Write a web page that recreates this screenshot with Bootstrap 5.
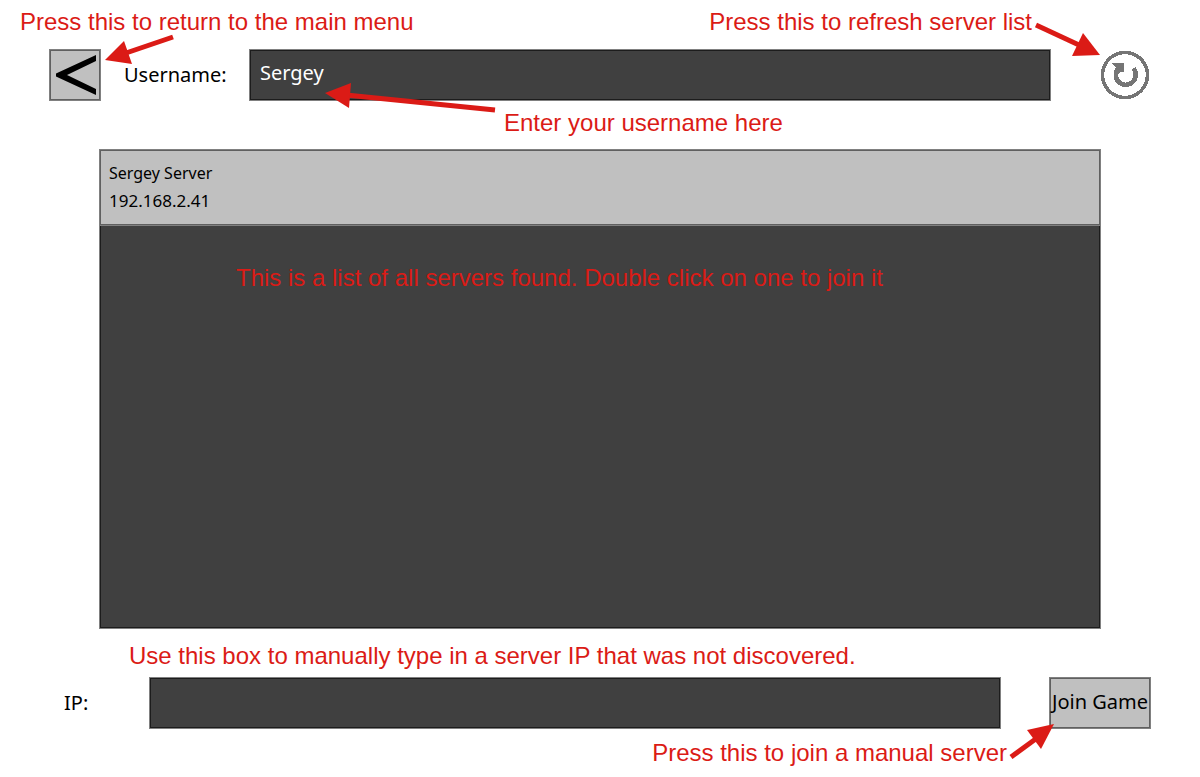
<!DOCTYPE html>
<html lang="en">
<head>
<meta charset="utf-8">
<meta name="viewport" content="width=device-width, initial-scale=1">
<title>Join a server</title>
<link href="https://cdn.jsdelivr.net/npm/bootstrap@5.3.0/dist/css/bootstrap.min.css" rel="stylesheet">
<style>
  body { font-family: "Noto Sans", "Open Sans", sans-serif; font-size: 20px; color: #000; background: #fff; }
  .screen { padding: 0 49px; }
  .panel { border: 1px solid #808080; border-radius: 0; }
  .panel-dark, .panel-dark:focus { background: #404040; color: #fff; box-shadow: inset 0 0 0 1px #1c1c1c; }
  .panel-light { background: #c0c0c0; color: #000; box-shadow: inset 0 0 0 1px #606060; }
  .control { height: 52px; }
  .field { padding: 0 10px 5px 10px; font-size: 20px; min-width: 0; }
  .square { width: 52px; }
  .field-label { width: 148px; padding-left: 23px; }
  .ip-label { width: 100px; padding-left: 15px; }
  .control-gap { margin-left: 48px; }
  .join { width: 102px; font-size: 20px; padding: 0 0 2px 0; }
  .refresh { width: 52px; }
  .server-area { padding: 0 50px; }
  .server { height: 77px; padding: 10px 9px; margin: -1px; font-size: 16px; line-height: 27px; }
  .server-ip { font-size: 17px; }
  .note { font-family: "Liberation Sans", Arial, sans-serif; font-size: 24px; line-height: 24px; color: #db1b16; }
  .note-top { height: 49px; padding-top: 10px; margin: 0 119px 0 -29px; }
  .note-username { height: 48px; padding: 10px 0 0 455px; }
  .note-list { padding: 41px 0 0 136px; }
  .note-ip { height: 48px; padding: 15px 0 0 80px; }
  .note-join { height: 48px; padding: 12px 144px 0 0; }
  .arrow { position: absolute; fill: #db1b16; stroke: none; pointer-events: none; z-index: 2; }
  .arrow line { stroke: #db1b16; stroke-width: 5; }
  .arrow-back { left: 55px; top: -15px; }
  .arrow-name { left: 75px; top: 32px; }
  .arrow-refresh { right: 50px; top: -27px; }
  .arrow-join { right: 96px; top: 46px; }
</style>
</head>
<body>
<main class="screen min-vh-100 d-flex flex-column">
  <div class="note note-top d-flex justify-content-between text-nowrap">
    <span>Press this to return to the main menu</span>
    <span>Press this to refresh server list</span>
  </div>

  <div class="d-flex align-items-center">
    <div class="position-relative">
      <button type="button" class="btn panel panel-light control square p-0 d-block" aria-label="Back to main menu">
        <svg class="d-block" width="50" height="50" viewBox="0 0 50 50" aria-hidden="true"><path d="M6 23.500 46 5v6L17 25l29 14v6L6 26.500z"/></svg>
      </button>
      <svg class="arrow arrow-back" width="72" height="32" viewBox="0 0 72 32" aria-hidden="true"><line x1="22" y1="19" x2="69" y2="3"/><path d="M1 26 20 7l8 23z"/></svg>
    </div>
    <label for="username" class="field-label flex-shrink-0">Username:</label>
    <div class="position-relative flex-grow-1">
      <input id="username" type="text" class="form-control panel panel-dark control field" value="Sergey">
      <svg class="arrow arrow-name" width="174" height="32" viewBox="0 0 174 32" aria-hidden="true"><line x1="22" y1="14" x2="171" y2="29"/><path d="M1 12 27 2l-2 25z"/></svg>
    </div>
    <div class="position-relative control-gap">
      <button type="button" class="btn control refresh p-0 border-0 d-block" aria-label="Refresh server list">
        <svg class="d-block" width="52" height="52" viewBox="0 0 52 52" fill="none" stroke="#757575" shape-rendering="crispEdges" aria-hidden="true">
          <circle cx="26" cy="26" r="22.500" stroke-width="3.500"/>
          <path d="M19 19.500a10 10 0 1 0 15.500 0" stroke-width="4.500"/>
          <path d="M13 14.500 25 14v9h-4l-2 2-4-3 2-3z" fill="#757575" stroke="none"/>
        </svg>
      </button>
      <svg class="arrow arrow-refresh" width="68" height="36" viewBox="0 0 68 36" aria-hidden="true"><line x1="3" y1="3" x2="46" y2="23"/><path d="M67 33 50 11 39 34z"/></svg>
    </div>
  </div>

  <div class="note note-username">Enter your username here</div>

  <section class="server-area flex-grow-1 d-flex" aria-label="Servers">
    <div class="panel panel-dark flex-grow-1">
      <ul class="list-unstyled mb-0">
        <li class="panel panel-light server">
          <div>Sergey Server</div>
          <div class="server-ip">192.168.2.41</div>
        </li>
      </ul>
      <div class="note note-list">This is a list of all servers found. Double click on one to join it</div>
    </div>
  </section>

  <div class="note note-ip">Use this box to manually type in a server IP that was not discovered.</div>

  <div class="d-flex align-items-center">
    <label for="ip" class="ip-label flex-shrink-0">IP:</label>
    <input id="ip" type="text" class="form-control panel panel-dark control field flex-grow-1">
    <div class="position-relative control-gap">
      <button type="button" class="btn panel panel-light control join text-nowrap d-block">Join Game</button>
      <svg class="arrow arrow-join" width="48" height="38" viewBox="0 0 48 38" aria-hidden="true"><line x1="4" y1="34" x2="30" y2="15"/><path d="M47 1 20 7l14 19z"/></svg>
    </div>
  </div>

  <div class="note note-join text-end">Press this to join a manual server</div>
</main>
<script src="https://cdn.jsdelivr.net/npm/bootstrap@5.3.0/dist/js/bootstrap.bundle.min.js"></script>
</body>
</html>
